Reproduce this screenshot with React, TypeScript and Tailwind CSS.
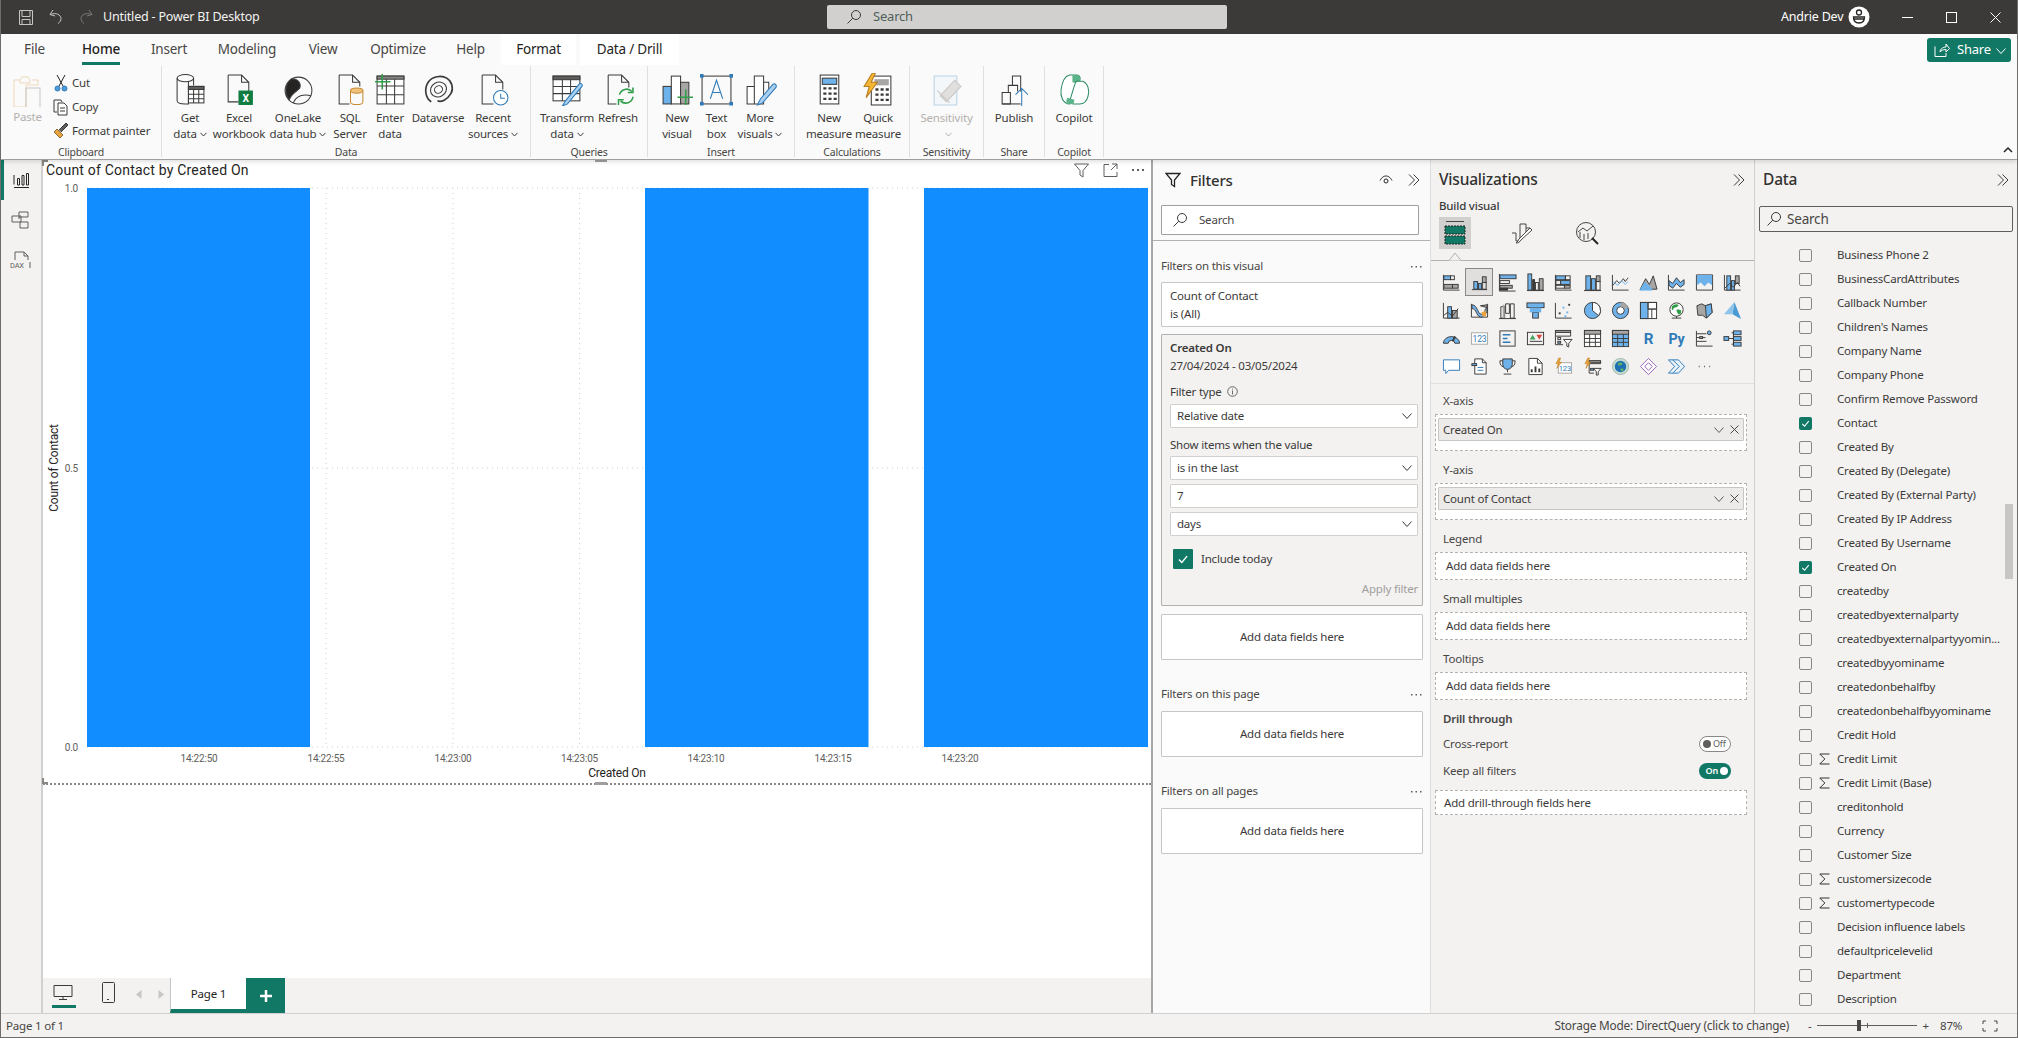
import type { ReactNode } from "react";

const INK = "#3b3a39";
const BLUE = "#6db2ea";
const GRAY = "#a8a6a4";
const GREEN = "#117865";

const Ico = ({ s = 20, vb = 20, children }: { s?: number; vb?: number; children: ReactNode }) => (
  <svg width={s} height={s} viewBox={`0 0 ${vb} ${vb}`} fill="none" stroke={INK} strokeWidth="1">
    {children}
  </svg>
);

const Chevrons = () => (
  <svg width="14" height="14" viewBox="0 0 14 14" fill="none" stroke={INK} strokeWidth="1">
    <path d="M2 1.5 7.5 7 2 12.5M6.500 1.5 12 7l-5.5 5.5" />
  </svg>
);

const Loupe = ({ c = INK }: { c?: string }) => (
  <svg width="16" height="16" viewBox="0 0 16 16" fill="none" stroke={c} strokeWidth="1">
    <circle cx="10" cy="6" r="4.5" />
    <path d="M6.8 9.2 1.5 14.5" />
  </svg>
);

const Down = ({ c = INK }: { c?: string }) => (
  <svg width="12" height="12" viewBox="0 0 12 12" fill="none" stroke={c} strokeWidth="1">
    <path d="M1.5 3.5 6 8.5l4.500-5" />
  </svg>
);

const Check = () => (
  <svg viewBox="0 0 12 12" className="w-full h-full" fill="none" stroke="#fff" strokeWidth="1.2">
    <path d="M2.5 6.5 5 9l4.500-5.500" />
  </svg>
);

const MiniChev = ({ c = "#3b3a39" }: { c?: string }) => (
  <svg className="inline-block ml-[3px]" width="7" height="5" viewBox="0 0 7 5" fill="none" stroke={c}>
    <path d="M.5.8 3.5 4l3-3.200" />
  </svg>
);

// visual gallery, 4 rows of 11
const vizIcons: ReactNode[] = [
  <><path d="M1.5 2v16h17" /><rect x="2" y="3" width="7" height="4" fill={BLUE} /><rect x="9" y="3" width="4" height="4" /><rect x="2" y="12" width="9" height="4" fill={GRAY} /><rect x="11" y="12" width="6" height="4" fill={GRAY} /></>,
  <><path d="M2 17.5h16" /><rect x="4" y="9" width="4" height="8" fill={BLUE} /><rect x="9" y="11" width="3" height="6" fill={BLUE} /><rect x="13" y="4" width="4" height="6" fill={GRAY} /><rect x="13" y="10" width="4" height="7" /></>,
  <><path d="M1.5 1v18h17" /><rect x="2" y="2" width="17" height="4" fill={BLUE} /><rect x="2" y="8" width="10" height="3" /><rect x="2" y="13" width="13" height="3" fill={GRAY} /><rect x="2" y="16" width="8" height="2" fill={INK} /></>,
  <><path d="M1 18.5h18" /><rect x="2" y="1" width="4" height="17" fill={BLUE} /><rect x="7" y="7" width="2" height="11" fill={INK} /><rect x="10" y="10" width="3" height="8" /><rect x="14" y="6" width="4" height="12" fill={GRAY} /></>,
  <><path d="M1.5 2v16h17" /><rect x="2" y="3" width="10" height="4" fill={BLUE} /><rect x="12" y="3" width="5" height="4" /><rect x="2" y="8" width="5" height="4" /><rect x="7" y="8" width="10" height="4" fill={BLUE} /><rect x="2" y="13" width="9" height="3" /><rect x="11" y="13" width="6" height="3" fill={GRAY} /></>,
  <><path d="M1 18.5h18" /><rect x="3" y="3" width="5" height="15" fill={BLUE} /><rect x="9" y="6" width="4" height="12" fill={BLUE} /><rect x="14" y="3" width="4" height="6" fill={GRAY} /><rect x="14" y="9" width="4" height="9" /></>,
  <><path d="M1.5 2v16h17" /><path d="M2 13l4-5 3 3 4-5 2 3 3-4" /><path d="M2 9l5 4 4-5 4 4 3-3" stroke={BLUE} /></>,
  <><path d="M1 17.5 7 6l4 6 4-9 4 14z" fill={GRAY} /><path d="M1 18l5-8 4 3 4 5z" fill={BLUE} stroke={BLUE} /></>,
  <><path d="M1.5 2v16h17" /><path d="M2 8l4 3 4-6 4 5 4-3v5l-4 3-4-4-4 5-4-3z" fill={BLUE} /></>,
  <><path d="M1.5 2h17v16h-17z" /><path d="M2 2h16v11l-4-3-4 4-4-4-4 3z" fill={BLUE} stroke="none" /></>,
  <><path d="M1.5 2v16h17" /><rect x="4" y="3" width="4" height="15" fill={BLUE} /><rect x="9" y="8" width="3" height="10" fill={BLUE} /><rect x="13" y="3" width="4" height="8" fill={GRAY} /><path d="M2 16l5-5 4 4 4-5 3 4" /></>,

  <><path d="M1.5 2v16h17" /><rect x="6" y="6" width="4" height="12" fill={BLUE} /><rect x="11" y="10" width="5" height="8" fill={GRAY} /><path d="M2 15l4-3 5 4 6-8" /></>,
  <><path d="M1.5 3v14h17V3" /><path d="M2 4c6 0 6 10 10 10s3-6 6-7v5c-3 1-4 6-7 5-5-2-4-9-9-9z" fill={BLUE} /><path d="M11 5l7-1v3z" fill={GRAY} /><path d="M12 12l5-2v6h-4z" fill="#e8a33d" stroke="none" /></>,
  <><path d="M1 18.5h18" /><path d="M3 6h4v12H3zM8 3h4v10H8zM13 3h4v15h-4z" /><rect x="5" y="4" width="2" height="14" fill={GRAY} stroke="none" /></>,
  <><rect x="1" y="2" width="18" height="5" fill={BLUE} /><rect x="7" y="12" width="6" height="6" fill={BLUE} /><path d="M4 7h12v5H4z" fill={BLUE} stroke="none" /></>,
  <><path d="M1.5 2v16h17" /><rect x="5" y="12" width="2" height="2" fill={INK} stroke="none" /><rect x="9" y="6" width="2" height="2" fill={BLUE} stroke="none" /><rect x="13" y="11" width="2" height="2" fill={BLUE} stroke="none" /><rect x="15" y="3" width="2" height="2" fill={INK} stroke="none" /><rect x="11" y="15" width="2" height="2" fill={BLUE} stroke="none" /></>,
  <><circle cx="10" cy="10" r="8.5" fill={BLUE} /><path d="M10 1.5V10l6.500 5.500A8.500 8.500 0 0 0 10 1.500z" fill="#fff" /></>,
  <><circle cx="10" cy="10" r="8.5" fill={BLUE} /><circle cx="10" cy="10" r="4" fill="#fff" /><path d="M10 1.5A8.500 8.500 0 0 1 18 7l-4 1.500A4 4 0 0 0 10 6z" fill={GRAY} stroke="none" /></>,
  <><rect x="1.5" y="1.5" width="17" height="17" fill="#fff" /><rect x="1.5" y="1.5" width="8" height="17" fill={BLUE} /><path d="M9.5 1.5h9v7h-9zM9.500 8.500h9M13.500 8.500v10" /></>,
  <><circle cx="10" cy="9" r="7" fill="#fff" /><path d="M5 6c2-3 6-3 7-2s-2 3-4 3-1 4-3 2zM10 9c3 0 5 0 5 2s-2 4-3 3-2-3-2-5z" fill="#2f9d4a" stroke="none" /><path d="M5 18h10M10 16v2" /></>,
  <><path d="M2 5l5-2 4 2 6-2 1 9-6 6-4-3-5 0z" fill={GRAY} /><path d="M11 5l6-2 1 9-6 6z" fill={BLUE} /></>,
  <><path d="M12 1 19 19 10 14z" fill="#4a9ad4" stroke="none" /><path d="M12 1 1 14l9 0z" fill="#8ec3ea" stroke="none" /></>,

  <><path d="M1.5 15a8.500 7 0 0 1 17 0h-5a3.500 3 0 0 0-7 0z" fill={BLUE} /><path d="M11 13 14 8" strokeWidth="2" /></>,
  <><rect x="1.5" y="4" width="17" height="12" fill="#fff" stroke={GRAY} /><text x="10" y="13.5" textAnchor="middle" fontSize="9" fill="#2f7ab8" stroke="none" fontFamily="Roboto, sans-serif">123</text></>,
  <><rect x="2" y="2" width="16" height="16" /><path d="M5 6h8M5 10h5M5 14h8" stroke="#2f7ab8" strokeWidth="1.5" /></>,
  <><rect x="1.5" y="3.5" width="17" height="13" /><path d="M4 11l3-5 3 5z" fill="#3fa35a" stroke="none" /><path d="M11 6h6l-3 5z" fill="#d9453d" stroke="none" /><path d="M4 13h13" /></>,
  <><path d="M1.5 3.5h16v4h-16zM1.500 7.500v9h8" /><rect x="1.5" y="1.5" width="16" height="2" fill={GRAY} /><rect x="4" y="9" width="3" height="2" /><rect x="4" y="13" width="3" height="2" fill={BLUE} /><path d="M10 11h9l-3.500 4v4l-2-1v-3z" fill="#fff" /></>,
  <><rect x="1.5" y="1.5" width="17" height="17" fill="#fff" /><rect x="1.5" y="1.5" width="17" height="4" fill={GRAY} /><path d="M1.5 10h17M1.500 14h17M7 5.500v13M13 5.500v13" /></>,
  <><rect x="1.5" y="1.5" width="17" height="17" fill={BLUE} /><rect x="1.5" y="1.5" width="17" height="4" fill={GRAY} /><path d="M1.5 10h17M1.500 14h17M7 5.500v13M13 5.500v13" /></>,
  <text x="10" y="16" textAnchor="middle" fontSize="16" fontWeight="700" fill="#2f7ab8" stroke="none" fontFamily="Roboto, sans-serif">R</text>,
  <text x="10" y="15.5" textAnchor="middle" fontSize="15" fontWeight="700" fill="#2f7ab8" stroke="none" fontFamily="Roboto, sans-serif">Py</text>,
  <><path d="M1.5 2v16h17M2 5h10M2 9h6M2 13h10M8 9h3" /><circle cx="15" cy="4" r="2" fill={BLUE} /><rect x="5" y="8" width="3" height="2" fill={GRAY} /></>,
  <><rect x="1" y="8" width="5" height="4" fill={BLUE} /><rect x="11" y="2" width="8" height="4" fill={BLUE} /><rect x="11" y="8" width="8" height="4" fill={BLUE} /><rect x="11" y="14" width="8" height="4" fill={BLUE} /><path d="M6 10h5M9 4h2v12h-2" /></>,

  <path d="M1.5 3h17v11H7l-3 3.500V14H1.500z" stroke="#2f7ab8" fill="#fff" />,
  <><path d="M5 2h8l4 4v12H5z" fill="#fff" /><path d="M13 2v4h4" /><rect x="2" y="7" width="5" height="2" fill={BLUE} /><path d="M8 11h6M8 14h6" stroke="#2f7ab8" /></>,
  <><path d="M5 2h10v6a5 5 0 0 1-10 0z" fill={BLUE} /><path d="M5 4H2c0 4 1 6 4 6M15 4h3c0 4-1 6-4 6M10 13v3M6 18h8" /></>,
  <><path d="M3 1.5h9l5 5v12H3z" fill="#fff" /><path d="M12 1.5v5h5" /><path d="M6 16v-3M10 16v-6M14 16v-4" stroke={INK} strokeWidth="2" /></>,
  <><rect x="4.5" y="6" width="14" height="11" fill="#fff" stroke={GRAY} /><text x="11.5" y="15" textAnchor="middle" fontSize="8" fill="#2f7ab8" stroke="none" fontFamily="Roboto, sans-serif">123</text><path d="M5 1 2 7h2.500L3 12l5-6.500H5.500L7 1z" fill="#e8a33d" stroke="#b87a1f" strokeWidth=".5" /></>,
  <><path d="M6.5 4h12v3h-12zM6.500 7v10h5" /><rect x="6.5" y="4" width="12" height="2" fill={GRAY} /><rect x="8" y="12" width="3" height="2" fill={BLUE} /><path d="M11 12h8l-3 3.500V19h-2v-3.500z" fill="#fff" /><path d="M5 1 2 7h2.500L3 12l5-6.500H5.500L7 1z" fill="#e8a33d" stroke="#b87a1f" strokeWidth=".5" /></>,
  <><circle cx="10" cy="10" r="8.5" fill="#c7dcd0" stroke="#9fb8aa" /><circle cx="10" cy="10" r="6" fill="#1f6fb5" stroke="none" /><path d="M7 7c2-2 5-1 5 0s-2 2-4 2zM10 12c2 0 4 0 3 2s-3 1-3-2z" fill="#5fb55f" stroke="none" /></>,
  <><path d="M10 1.5 18.500 10 10 18.500 1.500 10z" stroke="#9a5fb5" fill="#fff" /><path d="M10 6 14 10 10 14 6 10z" stroke="#9a5fb5" /></>,
  <><path d="M1.5 3H12l6.500 7-6.500 7H1.500L8 10z" stroke="#2f7ab8" fill="#e6f1fa" /><path d="M6 3l7 7-7 7" stroke="#2f7ab8" /></>,
  <path d="M4 10h1M9.5 10h1M15 10h1" strokeWidth="1.5" stroke="#605e5c" />,
];

const ribbonIcons: Record<string, ReactNode> = {
  getData: <><path d="M3 5v22c0 2 3 3 8 3h3V8" /><ellipse cx="11" cy="5" rx="8" ry="3.5" /><path d="M19 5v7" /><rect x="14" y="13" width="15" height="16" fill="#fff" /><rect x="14" y="13" width="15" height="3" fill="#605e5c" /><path d="M14 20.5h15M14 25h15M19 16v13M24 16v13" /></>,
  excel: <><path d="M5 2h13l7 7v9M5 2v26h10M18 2v7h7" /><rect x="15" y="17" width="14" height="14" fill="#107c41" stroke="none" /><text x="22" y="28" textAnchor="middle" fontSize="10" fill="#fff" stroke="none" fontFamily="Roboto, sans-serif" fontWeight="700">X</text></>,
  onelake: <><circle cx="16" cy="17" r="13" /><path d="M9 6c-6 5-7 13-2 20 2-6 7-8 10-11 2-4-1-10-8-9z" fill="#252423" /><path d="M11 29c3-7 10-9 17-7" /></>,
  sql: <><path d="M5 2h13l7 7v4M5 2v28h10M18 2v7h7" /><ellipse cx="22" cy="17" rx="6" ry="2.5" fill="#f2c27a" stroke="#c78c35" /><path d="M16 17v11c0 1.500 3 2.500 6 2.500s6-1 6-2.500V17" stroke="#c78c35" /></>,
  enter: <><rect x="3" y="3" width="26" height="27" fill="#fff" /><rect x="3" y="3" width="26" height="3" fill="#8a8886" /><path d="M3 12.5h26M3 21h26M12 6v24M20 6v24" /><path d="M8 1v15M1 8.500h15" stroke="#2f9d4a" strokeWidth="1.5" /></>,
  dataverse: <><path d="M9 28C3 24 2 15 6 9s13-7 18-4 7 10 4 15-9 9-13 7" strokeWidth="1.6" /><ellipse cx="16" cy="16" rx="8" ry="7" transform="rotate(-30 16 16)" /><ellipse cx="16" cy="16" rx="4" ry="3.5" transform="rotate(-30 16 16)" /></>,
  recent: <><path d="M5 2h13l7 7v7M5 2v28h11M18 2v7h7" /><circle cx="23" cy="24" r="7" stroke="#2f7ab8" fill="#fff" /><path d="M23 20v4.500h4" stroke="#2f7ab8" /></>,
  transform: <><rect x="2" y="3" width="26" height="24" fill="#fff" /><rect x="2" y="3" width="26" height="3.5" fill="#605e5c" /><path d="M2 13h26M2 20h26M11 6v21M19 6v21" /><path d="M27 11 14 27l-3 5 5-2 14-17c1-2-1-4-3-2z" fill="#a9d0ef" stroke="#2f7ab8" /></>,
  refresh: <><path d="M6 2h13l7 7v5M6 2v28h8M19 2v7h7" /><path d="M17 21a7 7 0 0 1 12-3M30 23a7 7 0 0 1-12 4" stroke="#2f9d4a" strokeWidth="1.5" /><path d="M30 14v5h-5M16 31v-5h5" stroke="#2f9d4a" strokeWidth="1.5" /></>,
  newVisual: <><rect x="2" y="13" width="8" height="17" fill={BLUE} /><rect x="10" y="3" width="9" height="27" fill="#fff" /><rect x="19" y="9" width="8" height="21" fill="#a8a6a4" /><path d="M24 16v15M16 23.500h15" stroke="#2f9d4a" strokeWidth="1.5" /></>,
  textBox: <><rect x="2" y="3" width="28" height="27" stroke="#3b3a39" /><path d="M10 25 16 7l6 18M12 19h8" stroke="#2f7ab8" /><rect x="0" y="1" width="3.5" height="3.5" fill="#2f7ab8" stroke="none" /><rect x="28.5" y="1" width="3.5" height="3.5" fill="#2f7ab8" stroke="none" /><rect x="0" y="28" width="3.5" height="3.5" fill="#2f7ab8" stroke="none" /><rect x="28.5" y="28" width="3.5" height="3.5" fill="#2f7ab8" stroke="none" /></>,
  moreVisuals: <><path d="M3 13h7v17H3zM10 3h9v27h-9zM19 9h5v8" fill="#fff" /><path d="M28 11 16 25l-3 6 5-2 13-15c1-2-1-5-3-3z" fill="#a9d0ef" stroke="#2f7ab8" /></>,
  newMeasure: <><rect x="7" y="2" width="18" height="28" fill="#fff" /><rect x="9" y="5" width="14" height="6" fill={BLUE} stroke={INK} /><path d="M10 15h3M15 15h3M20 15h3M10 20h3M15 20h3M20 20h3M10 25h3M15 25h3M20 25h3" strokeWidth="2.2" /></>,
  quick: <><rect x="9" y="3" width="19" height="28" fill="#fff" /><rect x="12" y="6" width="14" height="6" fill="#a8a6a4" stroke="none" /><path d="M13 16h3M18 16h3M23 16h3M13 21h3M18 21h3M23 21h3M13 26h3M18 26h3M23 26h3" strokeWidth="2.2" /><path d="M10 0 2 13h5L4 24 15 9H9l4-9z" fill="#f2b632" stroke="#b87a1f" /></>,
  sensitivity: <><path d="M4 3h22v28H4z" stroke="#b9d3e6" fill="#f3f7fa" /><path d="M10 22 24 7l6 6-14 15z" stroke="#c9c7c5" fill="#e1dfdd" /><path d="M7 17l12 12" stroke="#c9c7c5" /></>,
  publish: <><path d="M4 30V19h8v11zM10 19v-7h9v6M14 12V3h8v15" /><path d="M4 30h18" /><path d="M23 32V15M17 21l6-6 6 6" stroke="#2f7ab8" /></>,
  copilot: <><path d="M11 2h7c3 0 4 2 3 5l-5 18c-1 3-3 5-6 5-5-1-8-7-7-14 1-7 4-13 8-14z" fill="#fff" stroke="#2c8a63" /><path d="M14 2h5l3 3-1 6-7-2z" fill="#5bb38a" stroke="none" /><path d="M18 8h6c5 2 7 9 5 15-1 4-4 7-8 7h-6c-3 0-4-2-3-5l4-13c1-3 2-4 2-4z" fill="#fff" stroke="#2c8a63" /><path d="M9 24l7 2-1 4H9l-1-3z" fill="#5bb38a" stroke="none" /></>,
};

const RibbonBtn = ({ w, icon, lines, faded, chev }: { w: number; icon: string; lines: string[]; faded?: boolean; chev?: boolean }) => (
  <div className="flex flex-col items-center shrink-0 whitespace-nowrap" style={{ width: w }}>
    <div className="h-[36px] pt-[3px]">
      <Ico s={33} vb={32}>{ribbonIcons[icon]}</Ico>
    </div>
    <div className={`mt-[4px] text-[11.5px] leading-[16px] ${faded ? "text-[#b3b0ad]" : "text-[#3b3a39]"}`}>{lines[0]}</div>
    <div className={`text-[11.5px] leading-[16px] ${faded ? "text-[#b3b0ad]" : "text-[#3b3a39]"}`}>
      {lines[1] ?? (chev ? "" : "\u00a0")}
      {chev && <MiniChev c={faded ? "#b3b0ad" : "#3b3a39"} />}
    </div>
  </div>
);

const Group = ({ w, label, children }: { w: number; label: string; children: ReactNode }) => (
  <div className="shrink-0 flex flex-col border-r border-[#e1dfdd] h-[88px] mt-[1px] pt-[3px] box-content" style={{ width: w - 1 }}>
    <div className="flex h-[77px] shrink-0 pt-[1px]">{children}</div>
    <div className="text-center text-[10.5px] leading-[14px] text-[#484644] -mt-[1px]">{label}</div>
  </div>
);

const Tab = ({ w, label, active, ctx }: { w: number; label: string; active?: boolean; ctx?: boolean }) => (
  <div className={`relative shrink-0 flex items-center justify-center h-[31px] text-[13.5px] ${ctx ? "bg-white" : ""} ${active || ctx ? "text-[#252423]" : "text-[#484644]"} ${active ? "font-medium" : ""}`} style={{ width: w }}>
    {label}
    {active && <span className="absolute bottom-0 left-1/2 -translate-x-1/2 w-[38px] h-[3px] bg-[#117865]" />}
  </div>
);

const TitleBar = () => (
  <div className="h-[34px] bg-[#3b3a38] flex items-center text-white shrink-0 whitespace-nowrap">
    <div className="w-[17px] shrink-0" />
    <svg className="shrink-0" width="16" height="17" viewBox="0 0 16 17" fill="none" stroke="#c8c6c4"><path d="M1.5 1.5h13v14h-13zM4 1.500v6h8v-6M4 15.500v-5h8v5" /></svg>
    <svg className="ml-[13px] shrink-0" width="18" height="18" viewBox="0 0 18 18" fill="none" stroke="#c8c6c4"><path d="M6 2 3 6.500 8 8M3.500 6.500C9 4 14 7 14 10.500c0 2-1 3.500-3 5" /></svg>
    <svg className="ml-[12px] shrink-0" width="18" height="18" viewBox="0 0 18 18" fill="none" stroke="#7a7876"><path d="M12 2l3 4.500L10 8M14.500 6.500C9 4 4 7 4 10.500c0 2 1 3.500 3 5" /></svg>
    <span className="ml-[8px] w-[146px] shrink-0 text-[12.5px] text-[#f3f2f1]">Untitled - Power BI Desktop</span>
    <div className="ml-[578px] w-[400px] h-[24px] shrink-0 rounded-[2px] bg-[#d2d0ce] flex items-center pl-[19px] text-[13px] text-[#4f5f5a]">
      <Loupe />
      <span className="ml-[11px]">Search</span>
    </div>
    <span className="ml-[554px] w-[60px] shrink-0 text-[12.5px]">Andrie Dev</span>
    <svg className="ml-[7px] shrink-0" width="22" height="22" viewBox="0 0 22 22">
      <circle cx="11" cy="11" r="10.5" fill="#fff" />
      <circle cx="11" cy="6.5" r="2.5" fill="none" stroke="#252423" strokeWidth="1.3" />
      <path d="M5.5 11h11c0 4-2 6-5.500 6s-5.500-2-5.500-6zM5.500 13h11" fill="none" stroke="#252423" strokeWidth="1.3" />
    </svg>
    <svg className="ml-[32px] shrink-0" width="11" height="11" viewBox="0 0 11 11" stroke="#fff"><path d="M0 5.500h11" /></svg>
    <svg className="ml-[33px] shrink-0" width="11" height="11" viewBox="0 0 11 11" fill="none" stroke="#fff"><rect x=".5" y=".5" width="10" height="10" /></svg>
    <svg className="ml-[33px] shrink-0" width="11" height="11" viewBox="0 0 11 11" stroke="#fff"><path d="M.5.500l10 10M10.500.5l-10 10" /></svg>
  </div>
);

const Ribbon = () => (
  <div className="h-[126px] bg-[#fafafa] shrink-0 relative border-b border-[#a19f9d] shadow-[0_2px_4px_rgba(0,0,0,0.12)] z-10">
    <div className="flex h-[31px]">
      <Tab w={67} label="File" />
      <Tab w={66} label="Home" active />
      <Tab w={70} label="Insert" />
      <Tab w={86} label="Modeling" />
      <Tab w={66} label="View" />
      <Tab w={84} label="Optimize" />
      <Tab w={61} label="Help" />
      <Tab w={75} label="Format" ctx />
      <div className="w-[4px]" />
      <Tab w={99} label="Data / Drill" ctx />
    </div>
    <div className="absolute right-[6px] top-[4px] w-[84px] h-[24px] rounded-[3px] bg-[#117865] text-white flex items-center pl-[7px] text-[13px]">
      <svg width="16" height="16" viewBox="0 0 16 16" fill="none" stroke="#fff"><path d="M1 4.500v10h11V11M6 10c0-3 3-5 6-5V2l3.500 4.500L12 10V7.500c-3 0-5 1-6 2.500z" /></svg>
      <span className="ml-[7px]">Share</span>
      <span className="ml-[4px] mt-[1px]"><Down c="#fff" /></span>
    </div>
    <div className="flex">
      <Group w={161} label="Clipboard">
        <div className="w-[53px] flex flex-col items-center">
          <svg className="mt-[5px] ml-[-2px]" width="30" height="32" viewBox="0 0 30 32" fill="none" stroke="#eed9b8"><path d="M8 5H2v27h12V10h12V5h-6" /><path d="M8 5l2-3h6l2 3v3H8z" /><rect x="14" y="13" width="14" height="21" stroke="#c8c6c4" /></svg>
          <span className="text-[11.5px] text-[#b3b0ad] mt-[1px]">Paste</span>
        </div>
        <div className="flex flex-col text-[11.5px] text-[#3b3a39] whitespace-nowrap pt-[1px]">
          <div className="h-[24px] flex items-center -ml-[1px]">
            <svg width="16" height="18" viewBox="0 0 16 18" fill="none" stroke="#252423"><path d="M4 1l6 11M12 1L6 12" /><circle cx="4.5" cy="14.5" r="2.5" fill="#4f9bd9" stroke="#2f7ab8" /><circle cx="11.5" cy="14.5" r="2.5" fill="#4f9bd9" stroke="#2f7ab8" /></svg>
            <span className="ml-[3px]">Cut</span>
          </div>
          <div className="h-[24px] flex items-center -ml-[1px]">
            <svg width="16" height="18" viewBox="0 0 16 18" fill="none" stroke="#3b3a39"><path d="M4 14H1V2h7l1 2" /><path d="M5 5h6l3 3v9H5z" fill="#fff" /><path d="M7 10h5M7 13h5" /></svg>
            <span className="ml-[3px]">Copy</span>
          </div>
          <div className="h-[24px] flex items-center -ml-[1px]">
            <svg width="16" height="18" viewBox="0 0 16 18" fill="none" stroke="#8a6d3b"><path d="M1 10l6 6 3-3-6-6z" fill="#e8a33d" /><path d="M6 8l7-7 2 2-7 7" fill="#605e5c" stroke="#3b3a39" /></svg>
            <span className="ml-[3px]">Format painter</span>
          </div>
        </div>
      </Group>
      <Group w={369} label="Data">
        <div className="w-[3px]" />
        <RibbonBtn w={50} icon="getData" lines={["Get", "data"]} chev />
        <RibbonBtn w={48} icon="excel" lines={["Excel", "workbook"]} />
        <RibbonBtn w={70} icon="onelake" lines={["OneLake", "data hub"]} chev />
        <RibbonBtn w={34} icon="sql" lines={["SQL", "Server"]} />
        <RibbonBtn w={46} icon="enter" lines={["Enter", "data"]} />
        <RibbonBtn w={50} icon="dataverse" lines={["Dataverse"]} />
        <RibbonBtn w={60} icon="recent" lines={["Recent", "sources"]} chev />
      </Group>
      <Group w={117} label="Queries">
        <div className="w-[6px]" />
        <RibbonBtn w={60} icon="transform" lines={["Transform", "data"]} chev />
        <RibbonBtn w={42} icon="refresh" lines={["Refresh"]} />
      </Group>
      <Group w={147} label="Insert">
        <div className="w-[9px]" />
        <RibbonBtn w={40} icon="newVisual" lines={["New", "visual"]} />
        <RibbonBtn w={39} icon="textBox" lines={["Text", "box"]} />
        <RibbonBtn w={48} icon="moreVisuals" lines={["More", "visuals"]} chev />
      </Group>
      <Group w={115} label="Calculations">
        <div className="w-[9px]" />
        <RibbonBtn w={50} icon="newMeasure" lines={["New", "measure"]} />
        <RibbonBtn w={48} icon="quick" lines={["Quick", "measure"]} />
      </Group>
      <Group w={74} label="Sensitivity">
        <RibbonBtn w={73} icon="sensitivity" lines={["Sensitivity"]} faded chev />
      </Group>
      <Group w={61} label="Share">
        <RibbonBtn w={60} icon="publish" lines={["Publish"]} />
      </Group>
      <Group w={59} label="Copilot">
        <RibbonBtn w={58} icon="copilot" lines={["Copilot"]} />
      </Group>
    </div>
    <svg className="absolute right-[4px] bottom-[5px]" width="10" height="8" viewBox="0 0 10 8" fill="none" stroke="#252423" strokeWidth="1.5"><path d="M1 6l4-4 4 4" /></svg>
  </div>
);

const LeftNav = () => (
  <div className="w-[40px] shrink-0 bg-[#f3f2f1] relative flex flex-col items-center pt-[10px] gap-[20px]">
    <span className="absolute left-0 top-0 w-[3px] h-[40px] bg-[#117865]" />
    <svg width="20" height="20" viewBox="0 0 20 20" fill="none" stroke="#252423"><path d="M3 5v9.500M6.500 15V8.500h2V15zM11 15V5.500h2V15zM15.500 15V3.500h2V15zM3 17.500h15" /></svg>
    <svg width="20" height="20" viewBox="0 0 20 20" fill="none" stroke="#605e5c"><path d="M8 2h9v5H8zM1 6h9v6H1zM9 12h8v6H9zM8 7v2" /></svg>
    <svg width="22" height="22" viewBox="0 0 22 22" fill="none" stroke="#605e5c"><path d="M5 10V2h9l4 4v4M14 2v4h4M20 12v6" /><text x="0" y="18" fontSize="7.5" fill="#605e5c" stroke="none" fontFamily="Roboto, sans-serif">DAX</text></svg>
  </div>
);

const Chart = () => {
  const ticks = [
    { x: 199, t: "14:22:50" },
    { x: 326, t: "14:22:55" },
    { x: 453, t: "14:23:00" },
    { x: 579.5, t: "14:23:05" },
    { x: 706, t: "14:23:10" },
    { x: 833, t: "14:23:15" },
    { x: 960, t: "14:23:20" },
  ];
  return (
    <svg className="block" width="1108" height="604" viewBox="43 180 1108 604" fontFamily="Roboto, sans-serif">
      {[188, 468, 747].map((y) => (
        <line key={y} x1="87" x2="1148" y1={y} y2={y} stroke="#d0d0d0" strokeDasharray="1 4" />
      ))}
      {ticks.map((t) => (
        <line key={t.x} x1={t.x} x2={t.x} y1="188" y2="747" stroke="#d0d0d0" strokeDasharray="1 4" />
      ))}
      <rect x="87" y="188" width="223" height="559" fill="#118dff" />
      <rect x="645" y="188" width="223.5" height="559" fill="#118dff" />
      <rect x="924" y="188" width="224" height="559" fill="#118dff" />
      {ticks.map((t) => (
        <text key={t.t} x={t.x} y="762" textAnchor="middle" fontSize="10" fill="#605e5c">{t.t}</text>
      ))}
      <text x="78" y="192" textAnchor="end" fontSize="10" fill="#605e5c">1.0</text>
      <text x="78" y="472" textAnchor="end" fontSize="10" fill="#605e5c">0.5</text>
      <text x="78" y="751" textAnchor="end" fontSize="10" fill="#605e5c">0.0</text>
      <text x="617" y="777" textAnchor="middle" fontSize="12" fill="#252423">Created On</text>
      <text transform="translate(58 468) rotate(-90)" textAnchor="middle" fontSize="12" fill="#252423">Count of Contact</text>
    </svg>
  );
};

const Canvas = () => (
  <div className="w-[1110px] shrink-0 flex flex-col border-l-2 border-[#d2d0ce]">
    <div className="flex-1 bg-white">
      <div className="relative h-[625px] border-b-2 border-dotted border-[#8a8886]">
        <div className="h-[20px] flex items-center justify-between pl-[3px] pr-[6px]">
          <span className="text-[14px] tracking-[0.2px] text-[#252423] font-['Roboto',sans-serif]">Count of Contact by Created On</span>
          <div className="flex items-center gap-[14px]">
            <svg width="15" height="15" viewBox="0 0 15 15" fill="none" stroke="#605e5c"><path d="M.5 1h14L9 7.500V14L6 12V7.500z" /></svg>
            <svg width="15" height="15" viewBox="0 0 15 15" fill="none" stroke="#605e5c"><path d="M6 1.500H1v12h13V9M9 1h5v5M14 1 8 7" /></svg>
            <svg width="13" height="4" viewBox="0 0 13 4" fill="#605e5c"><rect y="1" width="2" height="2" /><rect x="5" y="1" width="2" height="2" /><rect x="10" y="1" width="2" height="2" /></svg>
          </div>
        </div>
        <Chart />
        <span className="absolute -left-[1px] top-0 w-[6px] h-[6px] border-l-2 border-t-2 border-[#8a8886]" />
        <span className="absolute -left-[1px] -bottom-[1px] w-[6px] h-[6px] border-l-2 border-b-2 border-[#8a8886]" />
        <span className="absolute left-[552px] -bottom-[2px] w-[12px] h-[3px] bg-[#a19f9d]" />
        <span className="absolute left-[552px] top-0 w-[12px] h-[2px] bg-[#a19f9d]" />
      </div>
    </div>
    <div className="h-[35px] bg-[#f3f2f1] flex shrink-0">
      <div className="relative w-[40px] flex justify-center pt-[6px]">
        <svg width="20" height="18" viewBox="0 0 20 18" fill="none" stroke="#3b3a39"><path d="M1 1.500h18v11H1zM10 12.500v3M6 15.500h8" /></svg>
        <span className="absolute left-[9px] bottom-[5px] w-[24px] h-[3px] bg-[#117865]" />
      </div>
      <div className="w-[50px] flex justify-center pt-[4px]">
        <svg width="13" height="21" viewBox="0 0 13 21" fill="none" stroke="#3b3a39"><rect x=".5" y=".5" width="12" height="20" rx="1" /><path d="M5 17.500h2" /></svg>
      </div>
      <div className="w-[37px] pl-[3px] pb-[3px] flex items-center gap-[16px]">
        <svg width="6" height="9" viewBox="0 0 6 9" fill="#c8c6c4"><path d="M5.5 0v9L0 4.500z" /></svg>
        <svg width="6" height="9" viewBox="0 0 6 9" fill="#c8c6c4"><path d="M.5 0v9L6 4.500z" /></svg>
      </div>
      <div className="w-[76px] bg-white border-b-[4px] border-l border-[#117865] flex items-center justify-center text-[11.5px] text-[#252423] [border-left-color:#c8c6c4]">Page 1</div>
      <div className="w-[39px] bg-[#117865] flex items-center justify-center">
        <svg width="12" height="12" viewBox="0 0 12 12" stroke="#fff" strokeWidth="2.5"><path d="M6 0v12M0 6h12" /></svg>
      </div>
    </div>
  </div>
);

const Select = ({ label, mt }: { label: string; mt: number }) => (
  <div className="ml-[8px] w-[248px] h-[24px] bg-white border border-[#d2d0ce] rounded-[1px] flex items-center justify-between pl-[6px] pr-[4px] text-[11.5px] text-[#3b3a39]" style={{ marginTop: mt }}>
    {label}
    <Down />
  </div>
);

const AddBox = ({ h, mt }: { h: number; mt: number }) => (
  <div className="ml-[8px] w-[262px] bg-white border border-[#c8c6c4] rounded-[1px] flex items-center justify-center text-[11.5px] text-[#3b3a39]" style={{ height: h, marginTop: mt }}>
    Add data fields here
  </div>
);

const SectionHead = ({ label, mt }: { label: string; mt: number }) => (
  <div className="h-[18px] flex items-center justify-between pl-[8px] pr-[8px] text-[11.5px] text-[#484644]" style={{ marginTop: mt }}>
    {label}
    <svg width="11" height="3" viewBox="0 0 11 3" fill="#605e5c"><rect y="1" width="1.5" height="1.5" /><rect x="4.5" y="1" width="1.5" height="1.5" /><rect x="9" y="1" width="1.5" height="1.5" /></svg>
  </div>
);

const Filters = () => (
  <div className="w-[280px] shrink-0 bg-[#fafafa] border-l-2 border-[#a6a6a6] border-r border-r-[#e1dfdd]">
    <div className="h-[38px] pt-[2px] flex items-center pl-[12px] pr-[9px]">
      <svg width="16" height="16" viewBox="0 0 16 16" fill="none" stroke="#252423" strokeWidth="1.3"><path d="M1 1.500h14L9.500 8v6.500l-3-2V8z" /></svg>
      <span className="ml-[9px] text-[15px] font-medium text-[#323130]">Filters</span>
      <svg className="ml-auto" width="14" height="10" viewBox="0 0 14 10" fill="none" stroke="#252423"><path d="M1 5.500C3 2 5 1 7 1s4 1 6 4.500" /><circle cx="7" cy="6" r="2" /></svg>
      <span className="ml-[14px]"><Chevrons /></span>
    </div>
    <div className="pb-[5px] border-b border-[#b3b0ad] pt-[7px]">
      <div className="ml-[8px] w-[258px] h-[30px] bg-white border border-[#a19f9d] rounded-[1px] flex items-center pl-[10px] text-[11.5px] text-[#484644]">
        <Loupe />
        <span className="ml-[11px]">Search</span>
      </div>
    </div>
    <SectionHead label="Filters on this visual" mt={16} />
    <div className="ml-[8px] w-[262px] h-[45px] mt-[7px] bg-white border border-[#c8c6c4] rounded-[1px] pl-[8px] pt-[4px] text-[11.5px] leading-[18px] text-[#3b3a39]">
      <div>Count of Contact</div>
      <div>is (All)</div>
    </div>
    <div className="ml-[8px] w-[262px] h-[272px] mt-[7px] bg-[#f3f2f1] border border-[#b3b0ad] rounded-[1px] text-[11.5px] text-[#3b3a39]">
      <div className="pl-[8px] pt-[4px] leading-[18px]">
        <div className="font-semibold">Created On</div>
        <div>27/04/2024 - 03/05/2024</div>
      </div>
      <div className="pl-[8px] mt-[8px] h-[18px] flex items-center">
        Filter type
        <svg className="ml-[5px] -mt-[2px]" width="11" height="11" viewBox="0 0 11 11" fill="none" stroke="#484644" strokeWidth=".8"><circle cx="5.5" cy="5.5" r="4.8" /><path d="M5.5 4.500v4M5.500 2.500v1" /></svg>
      </div>
      <Select label="Relative date" mt={3} />
      <div className="pl-[8px] mt-[8px] h-[18px] leading-[18px]">Show items when the value</div>
      <Select label="is in the last" mt={2} />
      <div className="ml-[8px] w-[248px] h-[24px] mt-[4px] bg-white border border-[#d2d0ce] rounded-[1px] flex items-center pl-[6px]">7</div>
      <Select label="days" mt={4} />
      <div className="mt-[13px] pl-[11px] flex items-center h-[20px]">
        <span className="w-[20px] h-[20px] bg-[#117865] rounded-[1px] p-[3px]"><Check /></span>
        <span className="ml-[8px]">Include today</span>
      </div>
      <div className="text-right pr-[4px] mt-[11px] text-[#a19f9d]">Apply filter</div>
    </div>
    <AddBox h={46} mt={8} />
    <SectionHead label="Filters on this page" mt={25} />
    <AddBox h={46} mt={8} />
    <SectionHead label="Filters on all pages" mt={25} />
    <AddBox h={46} mt={8} />
  </div>
);

const Pill = ({ label }: { label: string }) => (
  <div className="mx-[2px] h-[23px] bg-[#edebe9] border border-[#c8c6c4] rounded-[1px] flex items-center justify-between pl-[4px] pr-[4px] text-[11.5px] text-[#3b3a39]">
    {label}
    <span className="flex items-center gap-[5px]">
      <Down c="#605e5c" />
      <svg width="9" height="9" viewBox="0 0 9 9" stroke="#484644"><path d="M.5.500l8 8M8.500.5l-8 8" /></svg>
    </span>
  </div>
);

const WellLabel = ({ label, mt }: { label: string; mt: number }) => (
  <div className="ml-[12px] h-[16px] leading-[16px] text-[11.5px] text-[#484644]" style={{ marginTop: mt }}>{label}</div>
);

const Field = ({ label }: { label: string }) => (
  <div className="ml-[4px] mt-[5px] w-[312px] h-[37px] bg-white border border-dashed border-[#b3b0ad] pt-[3px]">
    <Pill label={label} />
  </div>
);

const EmptyWell = ({ label = "Add data fields here", h = 28, mt = 5, pl = 10 }: { label?: string; h?: number; mt?: number; pl?: number }) => (
  <div className="ml-[4px] w-[312px] bg-white border border-dashed border-[#b3b0ad] flex items-center text-[11.5px] text-[#3b3a39]" style={{ height: h, marginTop: mt, paddingLeft: pl }}>{label}</div>
);

const Visualizations = () => (
  <div className="w-[324px] shrink-0 bg-[#f3f2f1] border-r border-[#d2d0ce]">
    <div className="h-[38px] pt-[2px] flex items-center justify-between pl-[8px] pr-[8px]">
      <span className="text-[15.5px] font-medium text-[#323130]">Visualizations</span>
      <Chevrons />
    </div>
    <div className="pl-[8px] h-[16px] leading-[16px] text-[11.5px] font-medium text-[#3b3a39]">Build visual</div>
    <div className="relative h-[44px] mt-[3px] pl-[8px] flex border-b border-[#b3b0ad]">
      <div className="w-[32px] h-[32px] bg-[#d2d0ce] flex items-center justify-center">
        <svg width="24" height="26" viewBox="0 0 24 26" fill="none"><path d="M3 1.500h18" stroke="#484644" /><rect x="2" y="6" width="20" height="8" fill={GREEN} stroke="#252423" strokeDasharray="2 1" /><rect x="2" y="16" width="20" height="8" fill={GREEN} stroke="#252423" strokeDasharray="2 1" /></svg>
      </div>
      <div className="ml-[39px] mt-[4px]">
        <svg width="24" height="24" viewBox="0 0 24 24" fill="none" stroke="#484644"><path d="M2 12h4v8h4V3h6v11M16 7h4v3" /><path d="M22 9 11 19c-1 2-3 3-5 3 2-1 2-3 3-4l11-11z" fill="#fff" /></svg>
      </div>
      <div className="ml-[41px] mt-[4px]">
        <svg width="24" height="24" viewBox="0 0 24 24" fill="none" stroke="#484644"><circle cx="11" cy="11" r="9.5" /><path d="M5 11v6M9 13v6M13 12v6" /><path d="M3 11l5-4 4 3 6-5" /><path d="M17 17l6 6" strokeWidth="2" stroke="#252423" /></svg>
      </div>
      <svg className="absolute left-[13px] -bottom-[1px]" width="22" height="9" viewBox="0 0 22 9" fill="#f3f2f1" stroke="#b3b0ad"><path d="M0 8.500h5L11 1l6 7.500h5" /></svg>
    </div>
    <div className="h-[123px] pl-[6px] pt-[7px] border-b border-[#e1dfdd]">
      <div className="grid grid-cols-[repeat(11,28.2px)] auto-rows-[28px]">
        {vizIcons.map((ic, i) => (
          <div key={i} className={`flex items-center justify-center ${i === 1 ? "bg-[#e1dfdd] border border-[#8a8886]" : ""}`}>
            <Ico s={19}>{ic}</Ico>
          </div>
        ))}
      </div>
    </div>
    <WellLabel label="X-axis" mt={9} />
    <Field label="Created On" />
    <WellLabel label="Y-axis" mt={11} />
    <Field label="Count of Contact" />
    <WellLabel label="Legend" mt={11} />
    <EmptyWell />
    <WellLabel label="Small multiples" mt={11} />
    <EmptyWell />
    <WellLabel label="Tooltips" mt={11} />
    <EmptyWell />
    <div className="ml-[12px] mt-[11px] h-[16px] leading-[16px] text-[11.5px] font-semibold text-[#484644]">Drill through</div>
    <div className="ml-[12px] mt-[9px] mr-[23px] h-[16px] flex items-center justify-between text-[11.5px] text-[#484644]">
      Cross-report
      <span className="w-[32px] h-[16px] rounded-full border border-[#8a8886] bg-white flex items-center pl-[3px] gap-[2px] text-[9px] text-[#605e5c]">
        <span className="w-[8px] h-[8px] rounded-full bg-[#605e5c]" />Off
      </span>
    </div>
    <div className="ml-[12px] mt-[11px] mr-[23px] h-[16px] flex items-center justify-between text-[11.5px] text-[#484644]">
      Keep all filters
      <span className="w-[32px] h-[16px] rounded-full bg-[#117865] flex items-center justify-end pr-[3px] gap-[2px] text-[9px] font-semibold text-white">
        On<span className="w-[8px] h-[8px] rounded-full bg-white" />
      </span>
    </div>
    <EmptyWell label="Add drill-through fields here" h={25} mt={11} pl={8} />
  </div>
);

const fields: [string, number?][] = [
  ["Business Phone 2"], ["BusinessCardAttributes"], ["Callback Number"], ["Children's Names"],
  ["Company Name"], ["Company Phone"], ["Confirm Remove Password"], ["Contact", 1],
  ["Created By"], ["Created By (Delegate)"], ["Created By (External Party)"], ["Created By IP Address"],
  ["Created By Username"], ["Created On", 1], ["createdby"], ["createdbyexternalparty"],
  ["createdbyexternalpartyyomin..."], ["createdbyyominame"], ["createdonbehalfby"], ["createdonbehalfbyyominame"],
  ["Credit Hold"], ["Credit Limit", 2], ["Credit Limit (Base)", 2], ["creditonhold"],
  ["Currency"], ["Customer Size"], ["customersizecode", 2], ["customertypecode", 2],
  ["Decision influence labels"], ["defaultpricelevelid"], ["Department"], ["Description"],
];

const DataPane = () => (
  <div className="flex-1 bg-[#f3f2f1] relative overflow-hidden">
    <div className="h-[38px] pt-[2px] flex items-center justify-between pl-[8px] pr-[7px]">
      <span className="text-[15.5px] font-medium text-[#323130]">Data</span>
      <Chevrons />
    </div>
    <div className="ml-[4px] mt-[8px] w-[254px] h-[26px] border border-[#605e5c] rounded-[2px] flex items-center pl-[6px] text-[13.5px] text-[#484644]">
      <Loupe />
      <span className="ml-[5px]">Search</span>
    </div>
    <div className="mt-[11px]">
      {fields.map(([name, kind]) => (
        <div key={name} className="h-[24px] flex items-center pl-[44px] text-[11.5px] text-[#3b3a39] whitespace-nowrap">
          {kind === 1 ? (
            <span className="w-[13px] h-[13px] bg-[#117865] rounded-[2px] p-[1px]"><Check /></span>
          ) : (
            <span className="w-[13px] h-[13px] border border-[#8a8886] rounded-[2px]" />
          )}
          <span className="w-[25px] flex justify-center">
            {kind === 2 && (
              <svg width="11" height="12" viewBox="0 0 11 12" fill="none" stroke="#323130"><path d="M10.500 1H.8l5 5-5 5h9.700" /></svg>
            )}
          </span>
          {name}
        </div>
      ))}
    </div>
    <span className="absolute left-[250px] top-[344px] w-[8px] h-[75px] bg-[#c8c6c4]" />
  </div>
);

const StatusBar = () => (
  <div className="h-[24px] bg-[#f3f2f1] border-t border-[#d2d0ce] shrink-0 flex items-center pl-[5px] pr-[19px] text-[11.5px] text-[#484644]">
    <span>Page 1 of 1</span>
    <span className="ml-auto text-[11.8px]">Storage Mode: DirectQuery (click to change)</span>
    <span className="ml-[19px]">-</span>
    <div className="ml-[5px] relative w-[100px] h-[1px] bg-[#605e5c]">
      <span className="absolute left-[40px] -top-[5px] w-[4px] h-[11px] bg-[#484644]" />
      <span className="absolute left-[50px] -top-[2px] w-[1px] h-[5px] bg-[#605e5c]" />
    </div>
    <span className="ml-[6px]">+</span>
    <span className="ml-[11px] w-[32px]">87%</span>
    <svg className="ml-[10px]" width="16" height="12" viewBox="0 0 16 12" fill="none" stroke="#484644"><path d="M1 4V1h3M12 1h3v3M15 8v3h-3M4 11H1V8" /></svg>
  </div>
);

export default function App() {
  return (
    <div className="w-[2018px] h-[1038px] flex flex-col overflow-hidden border-x border-b border-[#6e6d6c] bg-white tracking-[-0.2px] font-['Noto_Sans',sans-serif]">
      <TitleBar />
      <Ribbon />
      <div className="flex flex-1 min-h-0">
        <LeftNav />
        <Canvas />
        <Filters />
        <Visualizations />
        <DataPane />
      </div>
      <StatusBar />
    </div>
  );
}
